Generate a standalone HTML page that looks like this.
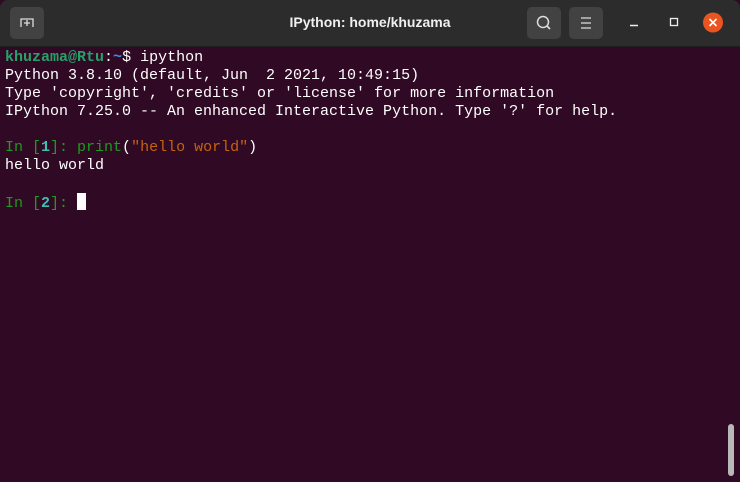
<!DOCTYPE html>
<html><head><style>
body{margin:0;width:740px;height:482px;background:#300a24;overflow:hidden;position:relative;font-family:"Liberation Mono",monospace}
.tb{position:absolute;left:0;top:0;width:740px;height:46px;background:#2c2c2c;border-radius:8px 8px 0 0;border-bottom:1px solid #1e1e1e}
.btn{position:absolute;top:7px;width:34px;height:32px;background:#424242;border-radius:5px}
.title{position:absolute;left:0;right:0;top:14px;text-align:center;color:#f0f0f0;font:bold 14px "Liberation Sans",sans-serif}
.term{position:absolute;left:5px;top:49px;font-size:15px;line-height:18px;color:#fff;white-space:pre}
.g{color:#26a269;font-weight:bold}.b{color:#3b8eea;font-weight:bold}
.gr{color:#1e9a1e}.cy{color:#40c0b0;font-weight:bold}.o{color:#c4640f}
.cur{display:inline-block;width:9px;height:17px;background:#fff;vertical-align:-3px}
.sb{position:absolute;left:728px;top:424px;width:6px;height:52px;background:#b8b8b8;border-radius:3px}
</style></head><body>
<div class="tb">
 <div class="btn" style="left:10px"><svg width="34" height="32"><path d="M11 20 V12 H23 V20 M17 13 V19 M14 16 H20" stroke="#ddd" stroke-width="1.3" fill="none"/></svg></div>
 <div class="title">IPython: home/khuzama</div>
 <div class="btn" style="left:527px"><svg width="34" height="32"><circle cx="16" cy="15" r="5.5" stroke="#ddd" stroke-width="1.5" fill="none"/><path d="M20 19 L23 22" stroke="#ddd" stroke-width="1.6"/></svg></div>
 <div class="btn" style="left:569px"><svg width="34" height="32"><path d="M12 11 H22 M12 16 H22 M12 21 H22" stroke="#ddd" stroke-width="1.3"/></svg></div>
 <svg style="position:absolute;left:620px;top:10px" width="110" height="28"><path d="M10 15.5 H18" stroke="#eee" stroke-width="1.5"/><rect x="50.5" y="8.5" width="7" height="7" stroke="#eee" stroke-width="1.3" fill="none"/><circle cx="93" cy="12.5" r="10" fill="#e95420"/><path d="M89.5 9 L96.5 16 M96.5 9 L89.5 16" stroke="#fff" stroke-width="1.6"/></svg>
</div>
<div class="term"><span class="g">khuzama@Rtu</span>:<span class="b">~</span>$ ipython
Python 3.8.10 (default, Jun  2 2021, 10:49:15)
Type 'copyright', 'credits' or 'license' for more information
IPython 7.25.0 -- An enhanced Interactive Python. Type '?' for help.

<span class="gr">In [</span><span class="cy">1</span><span class="gr">]: print</span>(<span class="o">"hello world"</span>)
hello world

<span class="gr">In [</span><span class="cy">2</span><span class="gr">]: </span><span class="cur"></span></div>
<div class="sb"></div>
</body></html>
